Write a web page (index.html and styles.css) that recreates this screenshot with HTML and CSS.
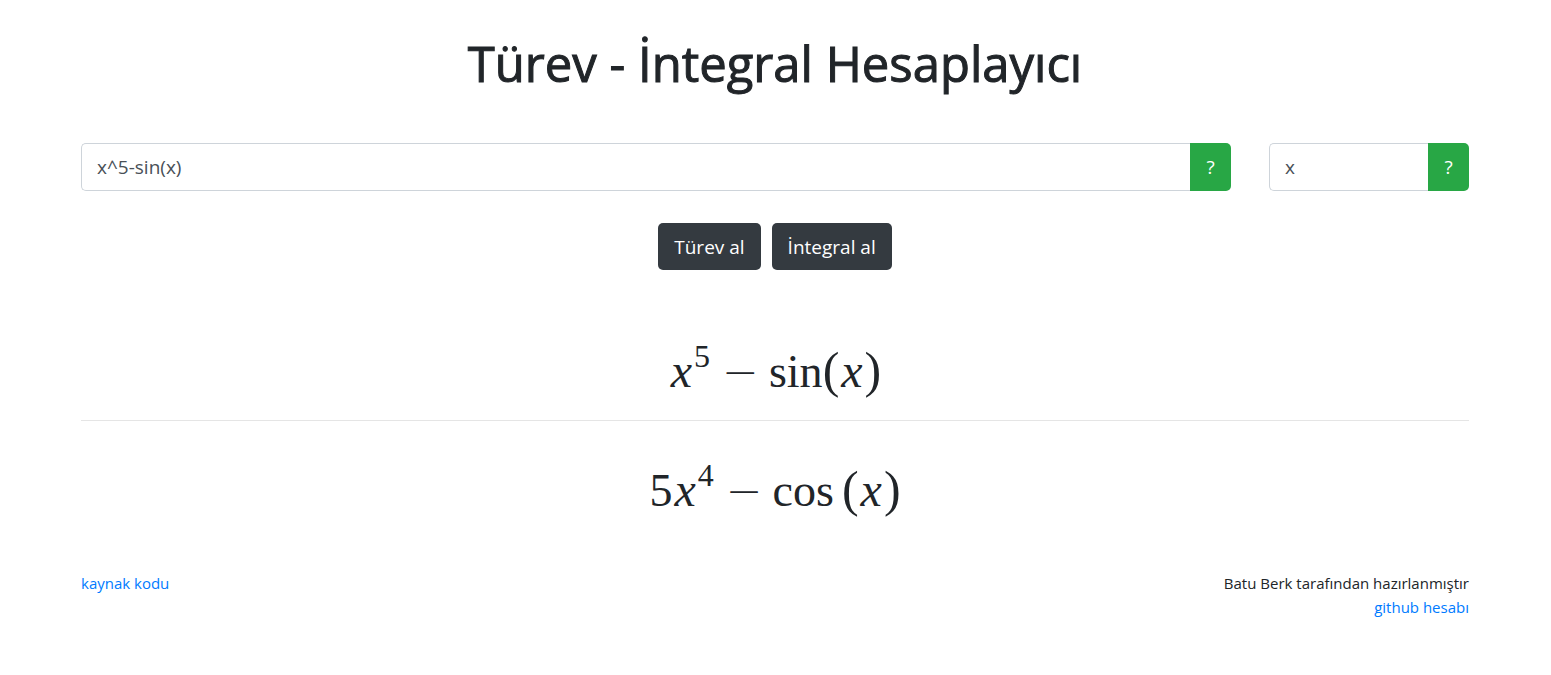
FILE: index.html
```html
<!DOCTYPE html>
<html lang="tr">
<head>
<meta charset="utf-8">
<meta name="viewport" content="width=device-width, initial-scale=1">
<title>Türev - İntegral Hesaplayıcı</title>
<link rel="stylesheet" href="styles.css">
</head>
<body>
<main class="page">
  <h1 class="title">Türev - İntegral Hesaplayıcı</h1>
  <form class="calculator">
    <div class="fields">
      <div class="input-group">
        <input class="input" type="text" value="x^5-sin(x)" aria-label="Fonksiyon">
        <button class="help" type="button" aria-label="Fonksiyon yardımı">?</button>
      </div>
      <div class="input-group">
        <input class="input" type="text" value="x" aria-label="Değişken">
        <button class="help" type="button" aria-label="Değişken yardımı">?</button>
      </div>
    </div>
    <div class="actions">
      <button class="btn" type="button">Türev al</button>
      <button class="btn" type="button">İntegral al</button>
    </div>
  </form>
  <section class="results">
    <div class="formula"><i class="var">x</i><sup class="power">5</sup><span class="minus">−</span><span class="func">sin</span><span class="paren">(</span><i class="var">x</i><span class="paren">)</span></div>
    <hr class="divider">
    <div class="formula"><span>5</span><i class="var">x</i><sup class="power">4</sup><span class="minus">−</span><span class="func spaced">cos</span><span class="paren">(</span><i class="var">x</i><span class="paren">)</span></div>
  </section>
  <footer class="footer">
    <a class="link" href="#">kaynak kodu</a>
    <div class="credit">
      <div>Batu Berk tarafından hazırlanmıştır</div>
      <a class="link" href="#">github hesabı</a>
    </div>
  </footer>
</main>
</body>
</html>
```
FILE: styles.css
```css
* { box-sizing: border-box; }
body {
  margin: 0;
  background: #fff;
  color: #212529;
  font: 15px/24px "Open Sans", "Noto Sans", sans-serif;
}
.page { padding: 32px 82px 48px 81px; }
.title {
  margin: 0 0 48px;
  font-size: 49px;
  font-weight: 500;
  line-height: 63px;
  text-align: center;
  -webkit-text-stroke: 1px currentColor;
}
.fields {
  display: grid;
  grid-template-columns: 23fr 4fr;
  gap: 38px;
}
.input-group { display: flex; height: 48px; min-width: 0; }
.input {
  flex: 1;
  min-width: 0;
  padding: 8px 15px;
  border: 1px solid #ced4da;
  border-right: 0;
  border-radius: 5px 0 0 5px;
  background: #fff;
  color: #495057;
  font: inherit;
  font-size: 19px;
}
.help {
  width: 41px;
  padding: 0;
  border: 0;
  border-radius: 0 5px 5px 0;
  background: #28a745;
  color: #fff;
  font: inherit;
  font-size: 19px;
}
.actions {
  display: flex;
  justify-content: center;
  gap: 11px;
  margin-top: 32px;
}
.btn {
  height: 47px;
  padding: 0 16px;
  border: 0;
  border-radius: 5px;
  background: #343a40;
  color: #fff;
  font: inherit;
  font-size: 19px;
}
.results { padding-top: 70px; }
.formula {
  display: flex;
  justify-content: center;
  align-items: baseline;
  font: 46px/60px "Liberation Serif", serif;
}
.var { padding: 0 2px; font-size: 48px; line-height: 60px; }
.power { align-self: flex-start; font-size: 32px; line-height: 32px; }
.minus {
  padding: 0 10px 0 12px;
  font: 200 44px/52px "DejaVu Sans Light", "DejaVu Sans", sans-serif;
}
.spaced { padding-right: 8px; }
.paren { font-size: 50px; line-height: 60px; }
.divider {
  margin: 18px 0 38px;
  border: 0;
  border-top: 1px solid #e5e5e5;
}
.footer {
  display: flex;
  justify-content: space-between;
  align-items: flex-start;
  margin-top: 50px;
}
.credit { text-align: right; }
.link { color: #007bff; text-decoration: none; }
```
